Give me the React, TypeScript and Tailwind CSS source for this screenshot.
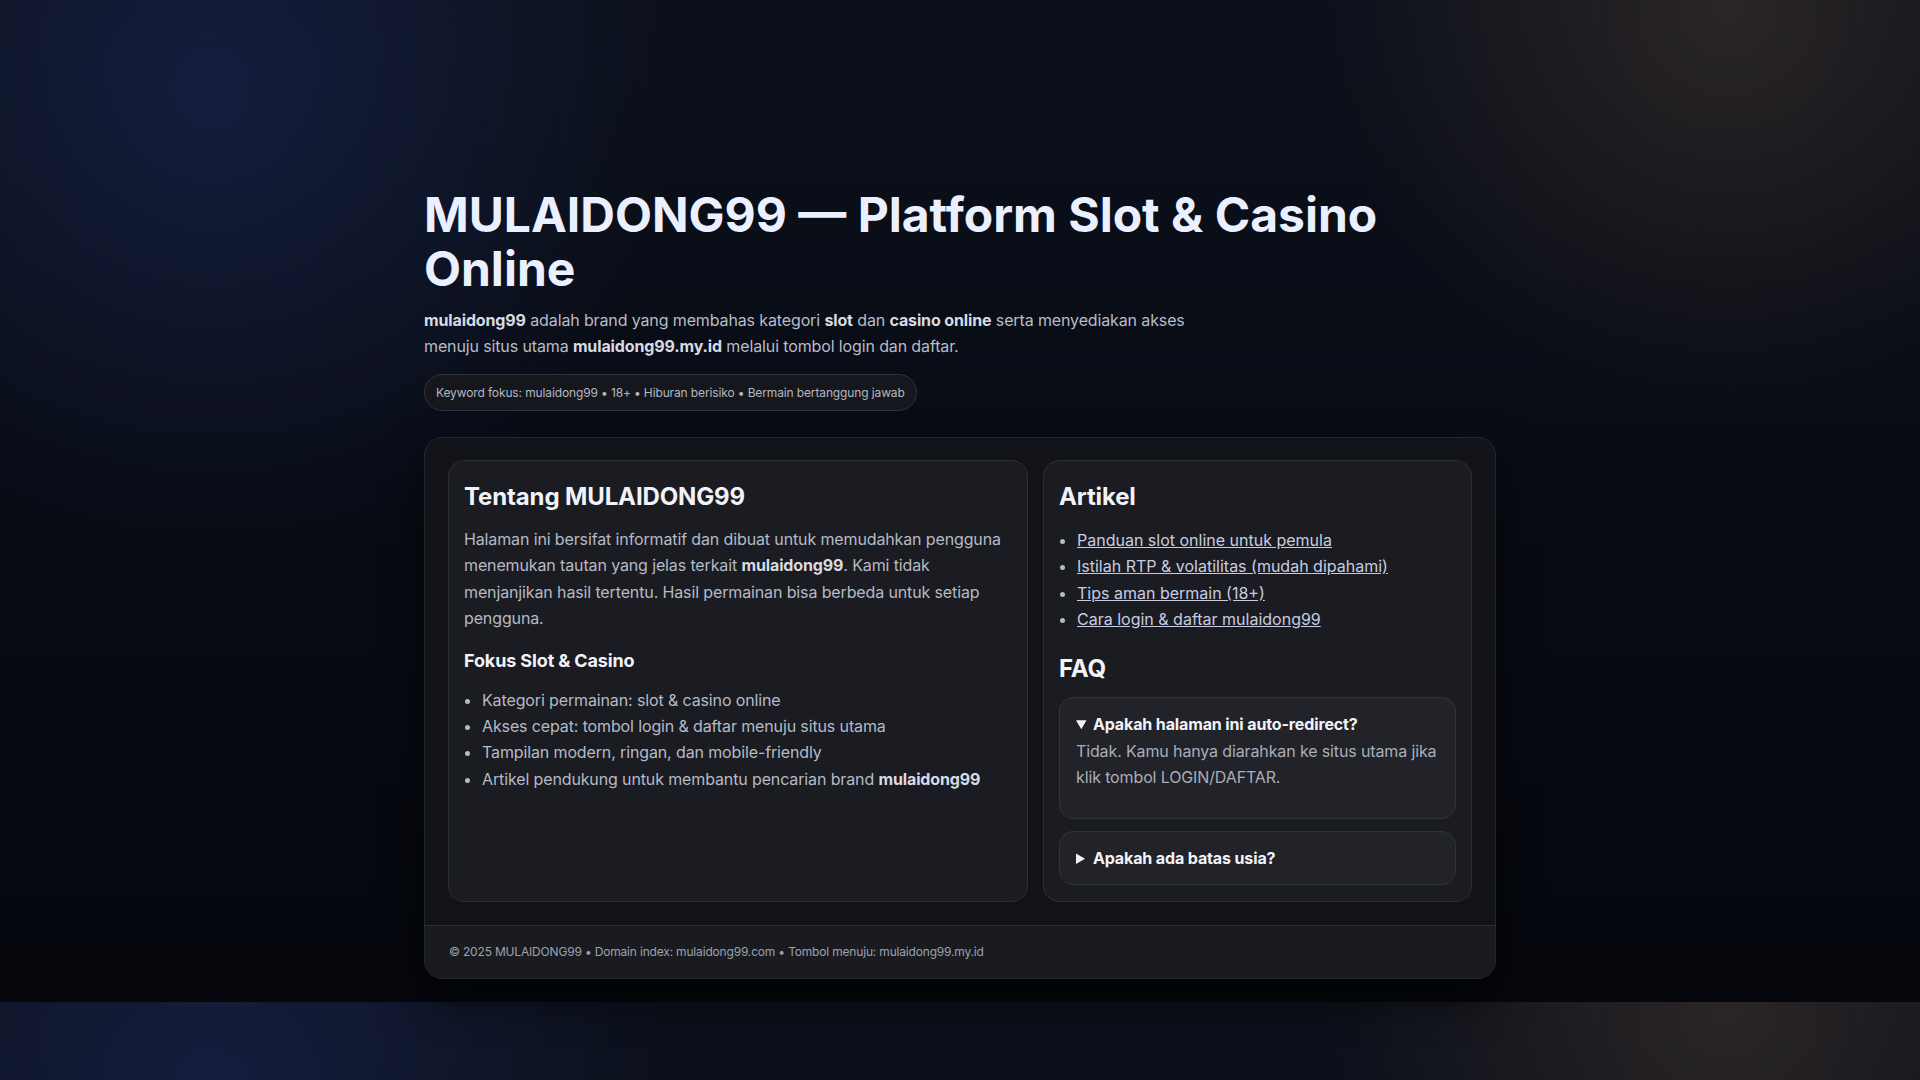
import React from "react"

const articles = [
  "Panduan slot online untuk pemula",
  "Istilah RTP & volatilitas (mudah dipahami)",
  "Tips aman bermain (18+)",
  "Cara login & daftar mulaidong99",
]

function Card({ children }: { children: React.ReactNode }) {
  return (
    <div className="rounded-[16px] border border-[#2c2f36] bg-[#1a1c22] px-[15px] pt-[21px] pb-4">
      {children}
    </div>
  )
}

function Faq({ q, a, open }: { q: string; a: string; open?: boolean }) {
  return (
    <details open={open} className="rounded-[14px] border border-[#30333a] bg-[#212329] px-4 py-[14px]">
      <summary className="cursor-pointer text-[16px] font-bold leading-[24px] text-[#f1f3f9]">{q}</summary>
      <p className="mt-[2px] mb-[14px] text-[16px] leading-[26.4px] text-[#a9aeb9]">{a}</p>
    </details>
  )
}

export default function App() {
  return (
    <div className="min-h-screen bg-[#070a11] bg-[radial-gradient(circle_640px_at_11%_9%,rgba(32,50,112,0.42),transparent_72%),radial-gradient(circle_560px_at_90%_1%,rgba(72,58,48,0.5),transparent_72%),linear-gradient(180deg,#0c101b_0%,#05070d_100%)] bg-[length:100%_1002px] bg-repeat font-['Inter','Noto_Sans',sans-serif] tracking-[-0.008em] text-[#b5bac5]">
      <main className="mx-auto w-full max-w-[1072px] pt-[188px] pb-[24px]">
        {/* Hero */}
        <header>
          <h1 className="text-[48px] font-bold leading-[54px] tracking-normal text-[#eaf0ff]">
            MULAIDONG99 — Platform Slot &amp; Casino Online
          </h1>
          <p className="mt-[11px] max-w-[790px] text-[16px] leading-[26px] text-[#b8bcc7]">
            <strong className="font-bold text-[#d8dbe3]">mulaidong99</strong> adalah brand yang membahas kategori{" "}
            <strong className="font-bold text-[#d8dbe3]">slot</strong> dan{" "}
            <strong className="font-bold text-[#d8dbe3]">casino online</strong> serta menyediakan akses menuju situs utama{" "}
            <strong className="font-bold text-[#d8dbe3]">mulaidong99.my.id</strong> melalui tombol login dan daftar.
          </p>
          <div className="mt-[15px] inline-flex rounded-full border border-[#30333a] bg-[#15171d] px-[11px] py-[8px] text-[12px] leading-[19px] text-[#b4b8c3]">
            Keyword fokus: mulaidong99 • 18+ • Hiburan berisiko • Bermain bertanggung jawab
          </div>
        </header>

        {/* Main panel */}
        <section className="mt-[26px] overflow-hidden rounded-[18px] border border-[#24272e] bg-[#111319] shadow-[0_20px_40px_rgba(0,0,0,0.6)]">
          <div className="grid grid-cols-[580px_1fr] gap-[15px] px-[23px] pt-[22px] pb-[23px]">
            <Card>
              <h2 className="text-[24px] font-bold leading-[30px] text-[#f1f3f9]">Tentang MULAIDONG99</h2>
              <p className="mt-[14px] text-[16px] leading-[26.4px]">
                Halaman ini bersifat informatif dan dibuat untuk memudahkan pengguna menemukan tautan yang jelas
                terkait <strong className="font-bold text-[#d8dbe3]">mulaidong99</strong>. Kami tidak menjanjikan hasil
                tertentu. Hasil permainan bisa berbeda untuk setiap pengguna.
              </p>
              <h3 className="mt-[17px] text-[18px] font-bold leading-[24px] text-[#f1f3f9]">Fokus Slot &amp; Casino</h3>
              <ul className="mt-[14px] list-disc pl-[18px] text-[16px] leading-[26.4px]">
                <li>Kategori permainan: slot &amp; casino online</li>
                <li>Akses cepat: tombol login &amp; daftar menuju situs utama</li>
                <li>Tampilan modern, ringan, dan mobile-friendly</li>
                <li>
                  Artikel pendukung untuk membantu pencarian brand{" "}
                  <strong className="font-bold text-[#d8dbe3]">mulaidong99</strong>
                </li>
              </ul>
            </Card>

            <Card>
              <h2 className="text-[24px] font-bold leading-[30px] text-[#f1f3f9]">Artikel</h2>
              <ul className="mt-[15px] list-disc pl-[18px] text-[16px] leading-[26.4px] tracking-normal">
                {articles.map((a) => (
                  <li key={a}>
                    <a href="#" className="text-[#c8cce0] underline">
                      {a}
                    </a>
                  </li>
                ))}
              </ul>

              <h2 className="mt-[21px] text-[24px] font-bold leading-[30px] text-[#f1f3f9]">FAQ</h2>
              <div className="mt-[13px] flex flex-col gap-[12px]">
                <Faq
                  open
                  q="Apakah halaman ini auto-redirect?"
                  a="Tidak. Kamu hanya diarahkan ke situs utama jika klik tombol LOGIN/DAFTAR."
                />
                <Faq q="Apakah ada batas usia?" a="Ya. Konten ini hanya untuk pengguna berusia 18 tahun ke atas." />
              </div>
            </Card>
          </div>

          <footer className="border-t border-[#2c2f36] bg-[#1a1b20] px-6 py-[17px] text-[12px] leading-[18px] tracking-[-0.015em] text-[#9da2ad]">
            © 2025 MULAIDONG99 • Domain index: mulaidong99.com • Tombol menuju: mulaidong99.my.id
          </footer>
        </section>
      </main>
    </div>
  )
}
